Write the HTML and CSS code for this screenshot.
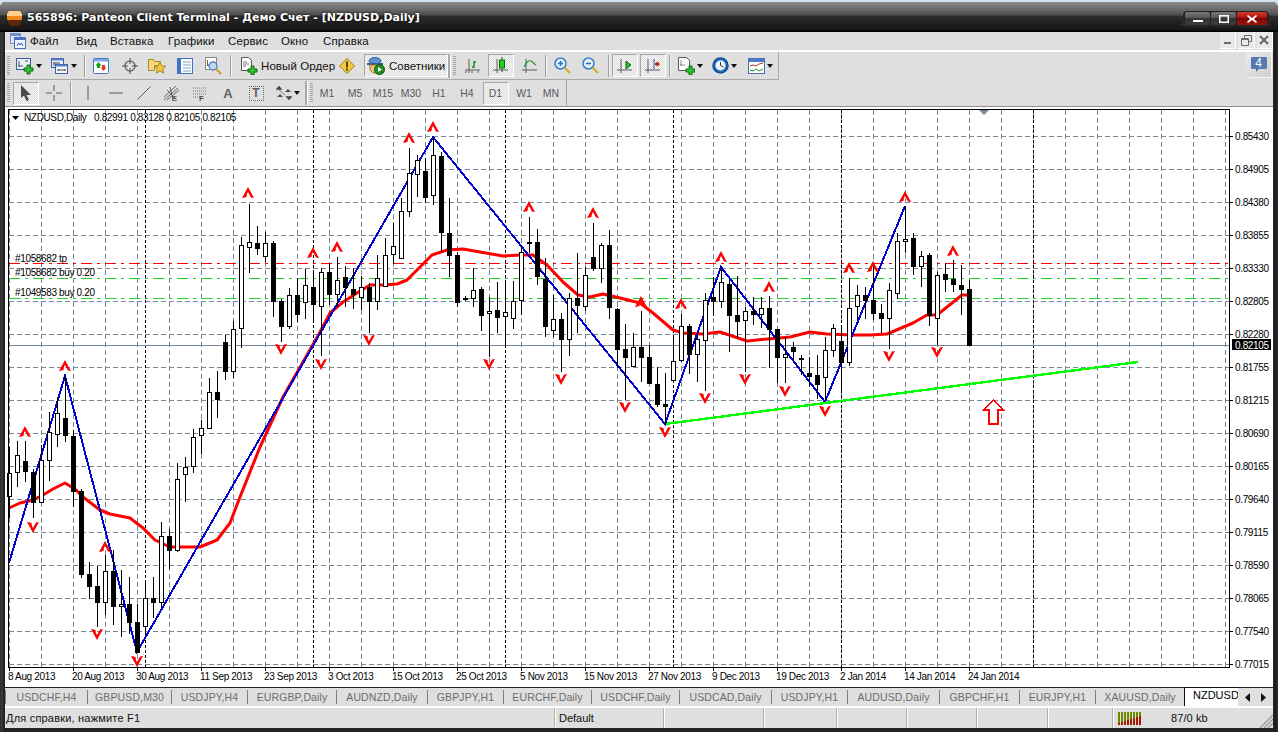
FILE: index.html
```html
<!DOCTYPE html>
<html lang="ru">
<head>
<meta charset="utf-8">
<title>565896: Panteon Client Terminal</title>
<link rel="stylesheet" href="styles.css">
</head>
<body>
<div class="window">
  <header class="titlebar">
    <svg class="logo" width="15" height="17" viewBox="0 0 15 17"><path d="M2 1h11l2 3v5l-2 3H2L0 9V4z" fill="#f08a1d"/><path d="M2 1h11l2 3v2H0V4z" fill="#ffd08a"/><path d="M1 10h13l-2 6H3z" fill="#5a2a08"/></svg>
    <span class="title">565896: Panteon Client Terminal - Демо Счет - [NZDUSD,Daily]</span>
    <div class="winbtns">
      <button class="wb"><svg width="10" height="8" viewBox="0 0 10 8"><rect y="5" width="10" height="2" fill="#fff"/></svg></button>
      <button class="wb"><svg width="10" height="8" viewBox="0 0 10 8"><rect x=".75" y=".75" width="8.5" height="6.5" fill="none" stroke="#fff" stroke-width="1.5"/></svg></button>
      <button class="wb wb-close"><svg width="10" height="8" viewBox="0 0 10 8"><path d="M1 0l4 3 4-3 1 1-3 3 3 3-1 1-4-3-4 3-1-1 3-3-3-3z" fill="#fff"/></svg></button>
    </div>
  </header>
  <div class="body">
    <nav class="menubar">
      <svg class="menu-icon" width="16" height="16" viewBox="0 0 16 16"><rect x=".5" y=".5" width="10" height="10" fill="#dfe9f8" stroke="#6f8fd0"/><rect x=".5" y=".5" width="10" height="2.5" fill="#6f8fd0"/><rect x="4.5" y="4.5" width="11" height="11" fill="#eef3fc" stroke="#4a6fc0"/><rect x="4.5" y="4.5" width="11" height="2.5" fill="#4a6fc0"/><path d="M7 13l1.500-3 1.500 2 1.500-2 1.500 3" fill="none" stroke="#3a5fb0"/></svg>
      <span>Файл</span><span>Вид</span><span>Вставка</span><span>Графики</span><span>Сервис</span><span>Окно</span><span>Справка</span>
      <div class="mdi">
        <button class="mdi-btn"><svg width="10" height="10" viewBox="0 0 10 10"><rect x="1" y="7" width="7" height="2" fill="#6a6a6a"/></svg></button>
        <button class="mdi-btn"><svg width="11" height="11" viewBox="0 0 11 11"><path d="M3.500 3V.5h7v6H8M.5 3.500h7v7h-7zM.5 4.500h7" fill="none" stroke="#6a6a6a"/></svg></button>
        <button class="mdi-btn"><svg width="10" height="10" viewBox="0 0 10 10"><path d="M1 1l8 8M9 1L1 9" stroke="#6a6a6a" stroke-width="2.200"/></svg></button>
      </div>
    </nav>

    <div class="toolbar tb1">
      <div class="tb-group">
        <i class="grip"></i>
        <button class="tb"><svg width="18" height="18" viewBox="0 0 18 18"><rect x=".5" y="1.500" width="14" height="11" fill="#eaf1fb" stroke="#3b5ea8"/><path d="M3 4v6M2 9h5M9 4h3" stroke="#555" fill="none"/><path d="M8 8h3V5h3v3h3v3h-3v3h-3v-3H8z" transform="translate(0 3)" fill="#33c433" stroke="#0b6b0b"/></svg><i class="drop"></i></button>
        <button class="tb"><svg width="18" height="18" viewBox="0 0 18 18"><rect x=".5" y="1.500" width="12" height="9" fill="#eaf1fb" stroke="#3b5ea8"/><rect x=".5" y="1.500" width="12" height="2" fill="#5a7ec8"/><rect x="4.500" y="7.500" width="12" height="9" fill="#f2f6fd" stroke="#3b5ea8"/><rect x="4.500" y="7.500" width="12" height="2" fill="#5a7ec8"/><path d="M3 5v4M3 6h6M7 13h7M7 12v2M14 12v2" stroke="#444" fill="none"/></svg><i class="drop"></i></button>
        <i class="sep"></i>
        <button class="tb"><svg width="16" height="16" viewBox="0 0 16 16"><rect x=".5" y=".5" width="15" height="15" rx="1" fill="#fff" stroke="#3f74c6"/><rect x="1" y="1" width="14" height="2.500" fill="#7fa8e0"/><path d="M5.500 4l3 3.500H7V10H4V7.500H2.500z" fill="#16a016"/><path d="M10.500 13l-3-3.500H9V7h3v2.500h1.500z" fill="#e03a20"/></svg></button>
        <button class="tb"><svg width="16" height="16" viewBox="0 0 16 16"><circle cx="8" cy="8" r="5" fill="none" stroke="#707070" stroke-width="1.600"/><path d="M8 0v6M8 10v6M0 8h6M10 8h6" stroke="#505050"/></svg></button>
        <button class="tb"><svg width="18" height="17" viewBox="0 0 18 17"><path d="M.5 2.500h5l1 2h6v4h-6v5h-6z" fill="#f7d77a" stroke="#a98a2a"/><path d="M12 5l1.800 3.800 4 .5-3 2.800.8 4-3.600-2-3.600 2 .8-4-3-2.800 4-.5z" fill="#f2c63a" stroke="#a98a2a"/></svg></button>
        <button class="tb"><svg width="16" height="16" viewBox="0 0 16 16"><rect x=".5" y=".5" width="15" height="15" fill="#fff" stroke="#3f74c6"/><rect x="1" y="1" width="3" height="14" fill="#3f74c6"/><path d="M6 4h8M6 7h8M6 10h8M6 13h8" stroke="#7f9ed0"/></svg></button>
        <button class="tb"><svg width="18" height="18" viewBox="0 0 18 18"><rect x=".5" y=".5" width="11" height="12" fill="#fff" stroke="#8a8a8a"/><path d="M2.500 3v6M2 8h5" stroke="#a0522d"/><circle cx="8" cy="9" r="4" fill="#bcd8f5" stroke="#4a7fc2" stroke-width="1.300"/><path d="M11 12l5 5" stroke="#c7a12e" stroke-width="2.400"/></svg></button>
        <i class="sep"></i>
        <button class="tb tb-text"><svg width="18" height="18" viewBox="0 0 18 18"><path d="M1.500.5h7l3 3v10h-10z" fill="#fff" stroke="#555"/><path d="M3 5h4M3 7h6M3 9h3" stroke="#777"/><path d="M9 9h3V6h3v3h3v3h-3v3h-3v-3H9z" transform="translate(-1 3)" fill="#33c433" stroke="#0b6b0b"/></svg><span>Новый Ордер</span></button>
        <button class="tb"><svg width="16" height="16" viewBox="0 0 16 16"><path d="M8 .5l7.500 7.500L8 15.500.5 8z" fill="#f5c93c" stroke="#a07a18"/><rect x="7" y="3.500" width="2" height="6" fill="#5a3d08"/><rect x="7" y="10.500" width="2" height="2" fill="#5a3d08"/></svg></button>
        <button class="tb tb-pressed tb-expert"><svg width="18" height="18" viewBox="0 0 18 18"><ellipse cx="8" cy="4" rx="6" ry="3.500" fill="#5c8fd0" stroke="#345a92"/><path d="M0 7h16" stroke="#345a92" stroke-width="2"/><path d="M3 8h10v5l-3 3H6l-3-3z" fill="#f1c27d" stroke="#a07a18"/><circle cx="12.500" cy="12.500" r="5" fill="#1e8f24" stroke="#0b5d10"/><path d="M11 10l4 2.500-4 2.500z" fill="#fff"/></svg><span>Советники</span></button>
        <div class="sep-grip"><i class="sep-light"></i><i class="grip"></i></div>
        <button class="tb"><svg width="16" height="16" viewBox="0 0 16 16"><path d="M4 1v14M0 12h15" stroke="#5c5c5c"/><path d="M9 3v7M7 9h2M9 4h2" stroke="#0f9a15" stroke-width="1.400" fill="none"/><path d="M1 13v2M7 13v2M13 13v2" stroke="#5c5c5c"/></svg></button>
        <button class="tb tb-pressed tb-small"><svg width="16" height="18" viewBox="0 0 16 18"><path d="M4 2v14M0 13h15" stroke="#5c5c5c"/><path d="M9 0v15" stroke="#0a6a0a"/><rect x="6.500" y="3" width="5" height="8" fill="#20d020" stroke="#0a6a0a"/></svg></button>
        <button class="tb"><svg width="16" height="16" viewBox="0 0 16 16"><path d="M4 1v14M0 12h15" stroke="#5c5c5c"/><path d="M2 9c2-5 5-7 7-6s3 3 5 4" fill="none" stroke="#1d9a24" stroke-width="1.200"/></svg></button>
        <i class="sep"></i>
        <button class="tb"><svg class="ic-zoom" width="17" height="17" viewBox="0 0 17 17"><circle cx="6.500" cy="6.500" r="5.500" fill="#dcecfb" stroke="#3d7cc4" stroke-width="1.500"/><path d="M4 6.500h5M6.500 4v5" stroke="#2a6ab8" stroke-width="1.400"/><path d="M10.500 10.500l5.500 5.500" stroke="#d4ad36" stroke-width="2.400"/></svg></button>
        <button class="tb"><svg class="ic-zoom" width="17" height="17" viewBox="0 0 17 17"><circle cx="6.500" cy="6.500" r="5.500" fill="#dcecfb" stroke="#3d7cc4" stroke-width="1.500"/><path d="M4 6.500h5" stroke="#2a6ab8" stroke-width="1.400"/><path d="M10.500 10.500l5.500 5.500" stroke="#d4ad36" stroke-width="2.400"/></svg></button>
        <i class="sep"></i>
        <button class="tb tb-pressed tb-small"><svg width="16" height="16" viewBox="0 0 16 16"><path d="M4 1v14M0 12h15" stroke="#5c5c5c"/><path d="M9 3l5 4-5 4z" fill="#22c422" stroke="#0a6a0a"/></svg></button>
        <button class="tb tb-pressed tb-small"><svg width="16" height="16" viewBox="0 0 16 16"><path d="M3 1v14M0 12h15" stroke="#5c5c5c"/><path d="M9 1v10" stroke="#2a5ab8"/><path d="M15 6H11M13 4l-3 2 3 2z" fill="#e03020" stroke="#b01a10"/></svg></button>
        <i class="sep"></i>
        <button class="tb"><svg width="17" height="18" viewBox="0 0 17 18"><path d="M.5.500h8l3 3v10h-11z" fill="#fff" stroke="#555"/><path d="M3 3v6M2 8h5" stroke="#888"/><path d="M8 9h3V6h3v3h3v3h-3v3h-3v-3H8z" transform="translate(0 3)" fill="#33c433" stroke="#0b6b0b"/></svg><i class="drop"></i></button>
        <button class="tb"><svg width="17" height="17" viewBox="0 0 17 17"><circle cx="8.500" cy="8.500" r="7.500" fill="#1d6fc0" stroke="#134f8f" stroke-width="1.500"/><circle cx="8.500" cy="8.500" r="5" fill="#f1f6fd"/><path d="M8.500 5v3.500l3 1.500" fill="none" stroke="#333"/></svg><i class="drop"></i></button>
        <button class="tb"><svg width="17" height="16" viewBox="0 0 17 16"><rect x=".5" y=".5" width="16" height="15" fill="#fff" stroke="#4a6fb0"/><rect x="1" y="1" width="15" height="3" fill="#4a7cc6"/><path d="M2 8l3-1 3 1 3-2 4-1" fill="none" stroke="#b03a1a"/><path d="M2 12l3 1 3-2 3 2 4-2" fill="none" stroke="#1c9a24"/></svg><i class="drop"></i></button>
      </div>
      <div class="notify"><svg width="16" height="16" viewBox="0 0 16 16"><path d="M1 0h14a1 1 0 0 1 1 1v10a1 1 0 0 1-1 1H8l-3 3v-3H1a1 1 0 0 1-1-1V1a1 1 0 0 1 1-1z" fill="#5878b0"/></svg><span class="notify-num">4</span></div>
    </div>

    <div class="toolbar tb2">
      <div class="tb-group">
        <i class="grip"></i>
        <button class="tb tb-pressed tb-small"><svg width="12" height="16" viewBox="0 0 12 16"><path d="M1 0l10 10H6.500l2.500 5-2.500 1-2.500-5.500L1 13z" fill="#4a4a4a"/></svg></button>
        <button class="tb"><svg width="16" height="16" viewBox="0 0 16 16"><path d="M8 0v6M8 10v6M0 8h6M10 8h6" stroke="#5a5a5a"/></svg></button>
        <i class="sep"></i>
        <button class="tb"><svg width="4" height="14" viewBox="0 0 4 14"><path d="M2 0v14" stroke="#5a5a5a"/></svg></button>
        <button class="tb"><svg width="14" height="4" viewBox="0 0 14 4"><path d="M0 2h14" stroke="#5a5a5a"/></svg></button>
        <button class="tb"><svg width="14" height="14" viewBox="0 0 14 14"><path d="M.5 13.500L13.500.5" stroke="#5a5a5a"/></svg></button>
        <button class="tb tb-lettered"><svg width="16" height="16" viewBox="0 0 16 16"><path d="M0 12L12 1M0 15L14 3M3 15L15 5M3 5l8 8M6 2l3 12" stroke="#666" fill="none"/></svg><span>E</span></button>
        <button class="tb tb-lettered"><svg width="14" height="14" viewBox="0 0 14 14"><path d="M0 2h14M0 5h14M0 8h14M0 11h10" stroke="#777" stroke-dasharray="1 1"/></svg><span>F</span></button>
        <button class="tb tb-glyph">A</button>
        <button class="tb"><span class="textbox">T</span></button>
        <button class="tb"><svg width="16" height="14" viewBox="0 0 16 14"><path d="M3 0l3 3.500H0zM3 4l6 5M13 14l-3-3.500h6z" fill="#4a4a4a" stroke="#4a4a4a" stroke-width=".6"/><path d="M4 8l3 3H1zM12 3l3 3H9z" fill="#4a4a4a"/></svg><i class="drop"></i></button>
        <div class="sep-grip tf-grip"><i class="sep-light"></i><i class="grip"></i></div>
        <button class="tf">M1</button><button class="tf">M5</button><button class="tf">M15</button><button class="tf">M30</button><button class="tf">H1</button><button class="tf">H4</button>
        <button class="tf tf-on">D1</button><button class="tf">W1</button><button class="tf">MN</button>
      </div>
    </div>

    <main class="workspace"><svg id="chart" class="chart" width="1268" height="580" viewBox="5 107 1268 580"></svg></main>

    <div class="tabs">
      <div class="tab tab-first"><span>USDCHF,H4</span></div>
      <div class="tab"><span>GBPUSD,M30</span></div>
      <div class="tab"><span>USDJPY,H4</span></div>
      <div class="tab"><span>EURGBP,Daily</span></div>
      <div class="tab"><span>AUDNZD,Daily</span></div>
      <div class="tab"><span>GBPJPY,H1</span></div>
      <div class="tab"><span>EURCHF,Daily</span></div>
      <div class="tab"><span>USDCHF,Daily</span></div>
      <div class="tab"><span>USDCAD,Daily</span></div>
      <div class="tab"><span>USDJPY,H1</span></div>
      <div class="tab"><span>AUDUSD,Daily</span></div>
      <div class="tab"><span>GBPCHF,H1</span></div>
      <div class="tab"><span>EURJPY,H1</span></div>
      <div class="tab tab-last"><span>XAUUSD,Daily</span></div>
      <div class="tab-active"><span>NZDUSD,Daily</span></div>
      <div class="tab-arrows">
        <svg width="5" height="9" viewBox="0 0 5 9"><path d="M5 0v9L0 4.500z" fill="#111"/></svg>
        <svg width="5" height="9" viewBox="0 0 5 9"><path d="M0 0v9l5-4.500z" fill="#111"/></svg>
      </div>
    </div>

    <footer class="status">
      <div class="cell cell-help">Для справки, нажмите F1</div>
      <div class="cell">Default</div>
      <div class="cell"></div>
      <div class="cell"></div>
      <div class="cell"></div>
      <div class="cell"></div>
      <div class="cell"></div>
      <div class="cell"></div>
      <div class="cell cell-bars"><svg width="24" height="13" viewBox="0 0 24 13"><path d="M1 0v11M4 0v10M7 0v9M10 0v8M13 0v7M16 0v6M19 0v5M22 0v4" stroke="#6f8a00" stroke-width="2"/><path d="M1 11v2M4 10v3M7 9v4M10 8v5M13 7v6M16 6v7M19 5v8M22 4v9" stroke="#a51c00" stroke-width="2"/></svg></div>
      <div class="cell cell-kb">87/0 kb</div>
      <svg class="size-grip" width="14" height="14" viewBox="0 0 14 14"><path d="M14 1L1 14M14 5L5 14M14 9L9 14" stroke="#9a9a9a" stroke-width="1.400"/></svg>
    </footer>
  </div>
</div>
<script src="chart.js"></script>
</body>
</html>
```
FILE: styles.css
```css
* { box-sizing: border-box; }
html, body { margin: 0; padding: 0; height: 100%; overflow: hidden; background: #cfe0f3; }
body { font-family: "Liberation Sans", Arial, sans-serif; font-size: 11px; color: #111; }
button { font: inherit; color: inherit; background: none; border: 0; padding: 0; margin: 0; }
i { font-style: normal; display: block; }

.window {
  width: 1278px; height: 730px; margin-top: 2px;
  display: flex; flex-direction: column;
  border-radius: 6px 6px 0 0; overflow: hidden;
  background: linear-gradient(to right, #2b2b2b 0, #3e3e3e 2px, #1c1c1c 4px, #262626 5px) left/5px 100% no-repeat,
              linear-gradient(to right, #2a2a2a, #1a1a1a, #333) right/5px 100% no-repeat, #222;
}
.titlebar {
  height: 30px; flex: none; display: flex; align-items: center; padding: 0 9px 0 7px;
  background: linear-gradient(#8e8e8e 0, #4e4e4e 13px, #2c2c2c 14px, #161616 28px, #000 29px);
}
.logo { margin-right: 5px; margin-top: 2px; }
.title { color: #fff; font: bold 12px "DejaVu Sans", sans-serif; font-size: 11px; letter-spacing: .02px; text-shadow: 0 0 3px #000; white-space: nowrap; }
.winbtns { margin-left: auto; display: flex; gap: 1px; padding: 1px 2px; border-radius: 4px; background: #222; box-shadow: 0 0 1px #999; margin-top: 3px; }
.wb { width: 25px; height: 13px; display: flex; align-items: center; justify-content: center;
  background: linear-gradient(#7a7a7a, #555 45%, #333 50%, #3c3c3c); border-radius: 2px; }
.wb-close { width: 30px; background: linear-gradient(#d43a30, #a8100a 45%, #7c0400 50%, #9c1810); }

.body { flex: 1; margin: 0 5px 4px; display: flex; flex-direction: column; min-height: 0; background: #dfdfdf; }

.menubar {
  height: 20px; flex: none; padding-bottom: 2px; border-bottom: 2px solid #fff;
  display: grid; grid-template-columns: 25px 46px 34px 58px 60px 53px 42px 1fr 53px; align-items: center;
  font-size: 11.500px; letter-spacing: .1px; background: #dfdfdf;
}
.menu-icon { justify-self: center; margin-left: 1px; }
.mdi { grid-column: 9; display: flex; gap: 2px; justify-content: flex-end; }
.mdi-btn { width: 17px; height: 17px; display: flex; align-items: center; justify-content: center; background: #e9e9e9; border-right: 1px solid #fff; border-bottom: 1px solid #fff; }

.toolbar { flex: none; display: flex; justify-content: space-between; background: #dfdfdf; }
.tb1 { height: 28px; }
.tb2 { height: 27px; border-bottom: 1px solid #8e8e8e; }
.tb-group { display: grid; align-items: center; justify-items: center; }
.tb1 .tb-group {
  width: 774px; height: 28px; border-right: 1px solid #a9a9a9; border-bottom: 1px solid #a9a9a9;
  grid-template-columns: 6px 35px 35px 7px 26px 31px 24px 32px 26px 6px 104px 20px 91px 13px 24px 32px 25px 7px 26px 30px 6px 28px 28px 5px 36px 33px 38px;
}
.tb2 .tb-group {
  width: 562px; height: 26px; border-right: 1px solid #a9a9a9; padding-right: 2px;
  grid-template-columns: 6px 29px 27px 7px 27px 29px 28px 28px 28px 28px 28px 35px 3px 5px repeat(6, 28px) 29px 28px 26px;
}
.tb2 .sep-grip.tf-grip { grid-column: 13 / span 2; width: 8px; }
.tb { display: flex; align-items: center; justify-content: center; gap: 2px; height: 24px; }
.drop { width: 0; height: 0; border: 3px solid transparent; border-top: 4px solid #111; border-bottom: 0; }
.grip { width: 3px; height: 20px; background: repeating-linear-gradient(#a3a3a3 0 1px, transparent 1px 2px); }
.sep { width: 1px; height: 22px; background: #9d9d9d; box-shadow: 1px 0 0 #f4f4f4; }
.sep-grip { display: flex; align-items: center; gap: 3px; justify-self: start; width: 13px; }
.sep-light { width: 2px; height: 24px; background: #a9a9a9; box-shadow: 1px 0 0 #fff; }
.tb-text { justify-self: start; margin-left: 7px; gap: 3px; font-size: 11.500px; letter-spacing: .08px; white-space: nowrap; }
.tb-pressed, .tf-on {
  border: 1px solid; border-color: #a8a8a8 #fff #fff #a8a8a8;
  background: repeating-conic-gradient(#f7f7f7 0 25%, #dcdcdc 0 50%) 0 0 / 2px 2px;
}
.tb-small { width: 26px; height: 23px; }
.tb-expert { justify-self: end; width: 84px; height: 23px; justify-content: flex-start; gap: 4px; padding-left: 2px; font-size: 11.500px; }
.tb-lettered { position: relative; }
.tb-lettered span { position: absolute; right: 3px; bottom: 2px; font-size: 8px; font-weight: bold; color: #555; }
.tb-glyph { font: bold 13px "Liberation Sans", sans-serif; color: #5f5f5f; }
.textbox { width: 15px; height: 15px; border: 1px dotted #6b6b6b; font: bold 12px/13px "Liberation Sans", sans-serif; color: #5f5f5f; text-align: center; }
.tf { font-size: 10.500px; color: #5a5a5a; height: 23px; width: 27px; }
.tf-on { width: 26px; }
.notify { width: 26px; height: 25px; margin: 1px 1px 0 0; position: relative; display: flex; align-items: center; justify-content: center;
  background: linear-gradient(135deg, #ececec, #cfcfcf); border-right: 1px solid #f4f4f4; border-bottom: 1px solid #f4f4f4; }
.notify-num { position: absolute; left: 0; right: 0; top: 4px; text-align: center; color: #fff; font-size: 12px; line-height: 13px; }

.workspace { height: 580px; flex: none; background: #fff; }
.chart { display: block; background: #fff; }
.chart text { font-family: "Liberation Sans", Arial, sans-serif; font-size: 10px; letter-spacing: -.35px; fill: #000; }
.chart .t-white { fill: #fff; }

.tabs {
  height: 21px; flex: none; display: grid; align-items: center; background: #dfdfdf;
  grid-template-columns: 83px 84px 76px 89px 91px 76px 88px 88px 92px 76px 92px 80px 76px 88px 54px 35px;
  border-top: 1px solid #222; border-bottom: 2px solid #fff; color: #6c6c6c;
}
.tab { height: 14px; display: flex; align-items: center; justify-content: center; border-right: 1px solid #7e7e74; font-size: 10.500px; letter-spacing: .12px; white-space: nowrap; }
.tab-first { border-left: 1px solid #7e7e74; }
.tab-last { border-right: 0; }
.tab-active { height: 19px; align-self: start; margin-top: -1px; background: #fff; color: #000; border: 1px solid #111; border-right: 0; border-bottom: 0; font-size: 11px; padding: 1px 0 0 8px; overflow: hidden; white-space: nowrap; box-shadow: inset 0 -1px 0 #fff; }
.tab-arrows { display: flex; justify-content: space-between; padding: 0 7px 0 7px; }

.status {
  height: 20px; flex: none; display: grid; align-items: stretch; position: relative;
  grid-template-columns: 549px 109px 100px 73px 70px 70px 71px 65px 51px 1fr;
  font-size: 11px; background: #dfdfdf;
}
.cell { display: flex; align-items: center; padding-left: 4px; border-left: 1px solid #b0b0b0; box-shadow: inset 1px 0 0 #fff; }
.cell-help { border: 0; box-shadow: none; padding-left: 1px; letter-spacing: .2px; }
.cell-bars { padding-left: 5px; }
.cell-kb { border: 0; box-shadow: none; padding-left: 8px; letter-spacing: .1px; }
.size-grip { position: absolute; right: 0; bottom: 0; }
```
FILE: chart.js
```js
(function () {
  var NS = 'http://www.w3.org/2000/svg';
  var svg = document.getElementById('chart');
  function el(name, attrs, parent, text) {
    var e = document.createElementNS(NS, name);
    for (var k in attrs) e.setAttribute(k, attrs[k]);
    if (text !== undefined) e.textContent = text;
    (parent || svg).appendChild(e);
    return e;
  }

  var L = 9, R = 1229, T = 110, B = 667;

  // background grid
  var grid = '';
  for (var y = 136; y <= 664; y += 33) grid += 'M' + L + ' ' + (y + .5) + 'H' + R;
  el('path', { d: grid, stroke: '#778899', 'stroke-dasharray': '5 3', fill: 'none', 'shape-rendering': 'crispEdges' });
  grid = '';
  for (var x = 9; x <= 1225; x += 32) grid += 'M' + (x + .5) + ' ' + T + 'V' + B;
  el('path', { d: grid, stroke: '#778899', 'stroke-dasharray': '5 3', fill: 'none', 'shape-rendering': 'crispEdges' });

  // period separators
  var seps = '';
  [145, 313, 505, 673, 841, 1033].forEach(function (s) { seps += 'M' + (s + .5) + ' ' + T + 'V' + B; });
  el('path', { d: seps, stroke: '#000', 'stroke-dasharray': '3 2', fill: 'none', 'shape-rendering': 'crispEdges' });

  // order lines and last price line
  [[263, '#ff0000'], [278, '#22d022'], [298, '#22d022']].forEach(function (o) {
    el('line', { x1: L, x2: R, y1: o[0] + .5, y2: o[0] + .5, stroke: o[1], 'stroke-dasharray': '11 5 3 5', 'shape-rendering': 'crispEdges' });
  });
  el('line', { x1: L, x2: R, y1: 345.5, y2: 345.5, stroke: '#778899', 'shape-rendering': 'crispEdges' });

  // moving average
  var ma = [[9,508],[20,503],[33,500],[43,495],[53,489],[65,483],[75,489],[83,497],[100,510],[110,514],[130,518],[143,528],[155,540],[170,547],[180,547],[200,547],[217,540],[230,523],[240,497],[260,447],[283,397],[307,355],[320,332],[330,313],[343,302],[357,293],[370,285],[383,285],[397,284],[407,280],[420,267],[432,255],[447,250],[463,249],[480,252],[503,256],[520,255],[533,255],[547,265],[563,282],[578,295],[590,297],[603,294],[620,298],[640,303],[653,313],[673,330],[683,333],[703,334],[720,332],[747,341],[757,340],[790,337],[810,332],[827,334],[853,335],[870,335],[887,334],[913,323],[927,315],[937,315],[962,295],[968,295]];
  el('polyline', { points: ma.join(' '), fill: 'none', stroke: '#ff0000', 'stroke-width': 3, 'stroke-linejoin': 'round' });

  // zigzag and trend line
  el('polyline', { points: '9,563 65,376 137,652 433,137 665,424 721,267 825,402 905,206', fill: 'none', stroke: '#0000cd', 'stroke-width': 2, 'shape-rendering': 'crispEdges' });
  el('line', { x1: 665, y1: 424, x2: 1138, y2: 362, stroke: '#00ff00', 'stroke-width': 2.4, 'shape-rendering': 'crispEdges' });

  // candles: body top, body bottom, wick top, wick bottom, white?
  var c = [
    [473,497,447,518,1],[455,473,441,487,1],[461,472,441,482,0],[472,503,469,518,0],[460,503,445,503,1],
    [432,461,412,481,1],[413,435,397,447,1],[418,436,376,442,0],[436,492,430,507,0],[491,575,489,578,0],
    [574,587,562,599,0],[586,603,566,627,0],[571,603,555,615,1],[571,607,550,625,0],[604,607,570,637,1],
    [604,623,577,634,0],[622,653,604,653,0],[598,627,582,635,1],[598,603,577,618,0],[536,603,522,607,1],
    [536,551,529,569,0],[479,551,463,552,1],[467,475,457,502,1],[437,467,429,473,1],[428,436,420,454,1],
    [392,429,378,429,1],[392,400,371,418,0],[342,372,335,380,0],[329,372,321,378,1],[245,329,237,348,1],
    [242,248,204,273,1],[243,249,226,255,0],[243,257,232,262,1],[243,302,241,317,0],[301,327,299,342,0],
    [295,327,288,329,1],[295,315,278,322,0],[285,303,269,319,1],[287,305,272,323,0],[272,307,268,356,1],
    [272,295,263,305,0],[280,295,257,307,1],[277,288,266,307,0],[289,295,268,309,0],[287,298,276,310,1],
    [287,302,283,333,0],[278,302,255,310,1],[255,287,238,287,1],[246,255,223,264,1],[211,259,198,259,1],
    [173,212,148,217,1],[160,175,155,197,1],[171,198,158,203,0],[155,196,137,205,1],[156,233,152,252,0],
    [233,256,198,277,0],[255,303,252,307,0],[298,300,296,301,0],[290,299,268,307,1],[289,316,287,331,0],
    [311,314,297,357,1],[310,318,282,333,0],[312,317,282,346,1],[301,319,281,329,1],[252,301,245,315,1],
    [242,244,217,253,0],[242,277,229,285,0],[279,327,258,337,0],[319,331,295,337,1],[319,340,313,372,0],
    [298,340,293,356,1],[298,306,253,333,0],[275,307,267,311,1],[257,269,223,271,0],[245,269,243,283,1],
    [245,308,230,319,0],[309,350,308,368,0],[349,358,324,400,0],[347,367,333,367,1],[347,358,311,382,0],
    [357,384,345,384,0],[384,405,367,407,0],[404,407,373,425,0],[361,381,337,383,1],[326,361,314,362,1],
    [326,355,324,374,0],[339,355,333,382,1],[300,341,293,391,1],[297,302,277,316,0],[282,302,267,308,1],
    [284,316,280,352,0],[315,322,276,338,0],[311,321,307,372,1],[311,315,297,325,0],[308,315,297,328,1],
    [308,330,296,368,0],[329,358,329,383,0],[354,358,337,383,1],[347,352,342,362,0],[358,360,355,375,0],
    [373,377,357,387,0],[375,385,355,399,0],[350,378,337,400,1],[328,351,324,357,1],[341,363,328,390,0],
    [308,363,278,366,1],[295,307,285,320,1],[295,301,287,319,0],[300,314,263,320,0],[313,319,304,333,0],
    [290,319,283,349,1],[241,294,233,299,1],[239,242,206,253,1],[238,267,233,275,0],[256,267,251,287,1],
    [255,316,253,326,0],[275,319,272,345,1],[274,280,263,292,0],[279,285,260,292,0],[285,290,265,315,0],
    [289,346,280,346,0]
  ];
  var wicks = '', blacks = '', whites = [];
  c.forEach(function (k, n) {
    var x = 9 + 8 * n;
    if (x > 10) wicks += 'M' + (x + .5) + ' ' + k[2] + 'V' + k[3];
    else wicks += 'M' + (x + .5) + ' ' + k[2] + 'V' + k[3];
    if (k[4]) whites.push([x, k[0], k[1]]);
    else blacks += 'M' + (x - 2) + ' ' + k[0] + 'h5V' + k[1] + 'h-5z';
  });
  el('path', { d: wicks, stroke: '#000', fill: 'none', 'shape-rendering': 'crispEdges' });
  whites.forEach(function (w) {
    el('rect', { x: w[0] - 1.5, y: w[1] + .5, width: 4, height: w[2] - w[1] - 1, fill: '#fff', stroke: '#000', 'shape-rendering': 'crispEdges' });
  });
  el('path', { d: blacks, fill: '#000', 'shape-rendering': 'crispEdges' });

  // fractal markers
  var UP = 'M0 -6L6 5 3 4.500 0 -1 -3 4.500 -6 5Z M0 -6L-1.500 4 -6 5Z';
  [[25,432],[65,366],[105,547],[248,193],[313,253],[337,247],[409,138],[433,127],[529,207],[593,213],[641,302],[681,304],[721,257],[769,287],[849,268],[873,267],[905,197],[953,251]].forEach(function (p) {
    el('path', { d: UP, fill: '#ff0000', transform: 'translate(' + p[0] + ' ' + p[1] + ')' });
  });
  [[33,527],[97,634],[137,661],[281,349],[321,364],[369,340],[489,364],[561,379],[625,407],[665,432],[705,398],[745,379],[785,391],[825,411],[889,356],[937,352]].forEach(function (p) {
    el('path', { d: UP, fill: '#ff0000', transform: 'translate(' + p[0] + ' ' + p[1] + ') scale(1 -1)' });
  });

  // drawn up arrow
  el('path', { d: 'M993.500 400L1003 409.500H998V423.500H989V409.500H984Z', fill: 'none', stroke: '#ff0000', 'stroke-width': 2, 'shape-rendering': 'crispEdges' });

  // shift marker
  el('path', { d: 'M979 110h10l-5 5z', fill: '#778899' });

  // frame
  el('rect', { x: 8.5, y: 109.5, width: 1221, height: 558, fill: 'none', stroke: '#000', 'shape-rendering': 'crispEdges' });

  // header and order labels
  el('path', { d: 'M12 116h7l-3.500 4z', fill: '#000' });
  el('text', { x: 24, y: 121 }, svg, 'NZDUSD,Daily');
  el('text', { x: 94, y: 121 }, svg, '0.82991 0.83128 0.82105 0.82105');
  el('text', { x: 15, y: 262 }, svg, '#1058682 tp');
  el('text', { x: 15, y: 276 }, svg, '#1058682 buy 0.20');
  el('text', { x: 15, y: 296 }, svg, '#1049583 buy 0.20');

  // price axis
  var prices = ['0.85430','0.84905','0.84380','0.83855','0.83330','0.82805','0.82280','0.81755','0.81215','0.80690','0.80165','0.79640','0.79115','0.78590','0.78065','0.77540','0.77015'];
  var ticks = '';
  prices.forEach(function (p, i) {
    var y = 136 + 33 * i;
    ticks += 'M1230 ' + (y + .5) + 'h3';
    el('text', { x: 1235, y: y + 4 }, svg, p);
  });
  el('rect', { x: 1232, y: 339, width: 39, height: 11, fill: '#000', 'shape-rendering': 'crispEdges' });
  el('text', { x: 1235, y: 349, 'class': 't-white' }, svg, '0.82105');

  // time axis
  var dates = ['8 Aug 2013','20 Aug 2013','30 Aug 2013','11 Sep 2013','23 Sep 2013','3 Oct 2013','15 Oct 2013','25 Oct 2013','5 Nov 2013','15 Nov 2013','27 Nov 2013','9 Dec 2013','19 Dec 2013','2 Jan 2014','14 Jan 2014','24 Jan 2014'];
  dates.forEach(function (d, i) {
    var x = 9 + 64 * i;
    ticks += 'M' + (x + .5) + ' 668v3';
    el('text', { x: x - 1, y: 680 }, svg, d);
  });
  el('path', { d: ticks, stroke: '#000', 'shape-rendering': 'crispEdges' });
})();
```
